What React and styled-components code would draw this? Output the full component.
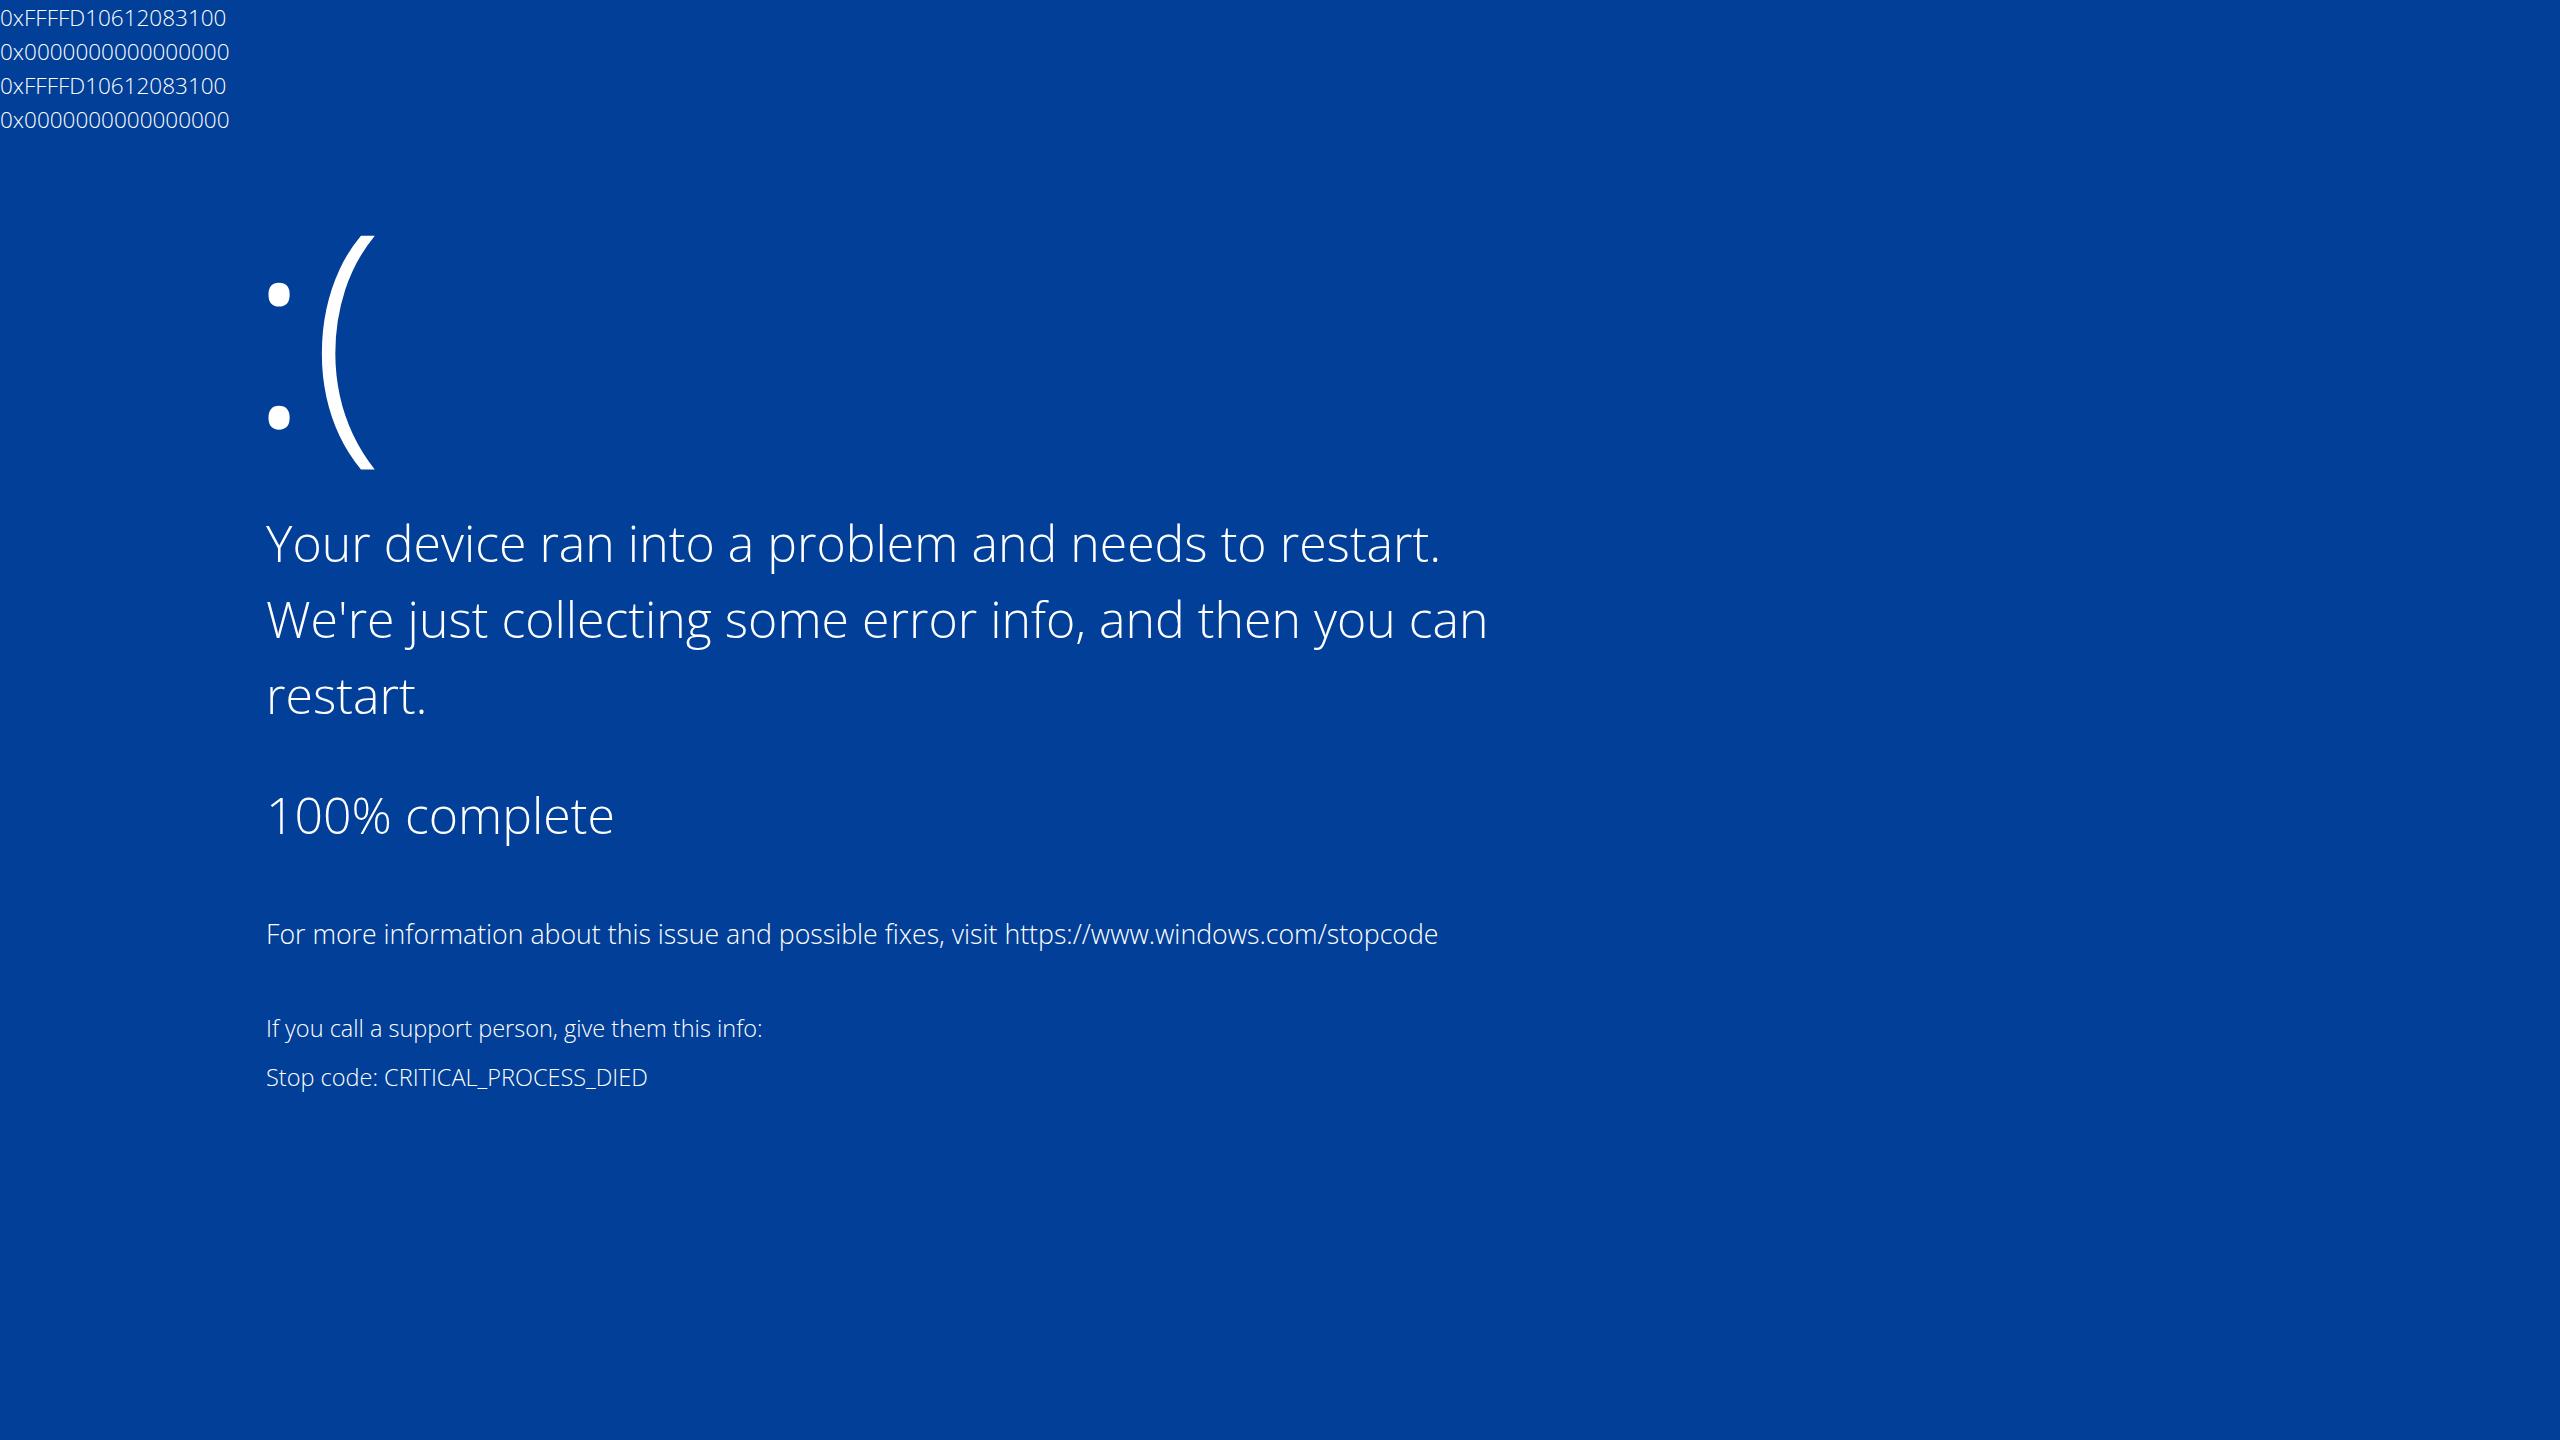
import React from "react"
import styled, { createGlobalStyle } from "styled-components"

const GlobalStyle = createGlobalStyle`
  html, body {
    margin: 0;
    padding: 0;
    background: #013f98;
  }
  body {
    font-family: "Open Sans", "Noto Sans", sans-serif;
    color: #ffffff;
  }
`

const Screen = styled.div`
  width: 2560px;
  height: 1440px;
  background: #013f98;
  overflow: hidden;
`

const HexDump = styled.div`
  font-size: 22.5px;
  font-weight: 300;
  line-height: 34px;
  padding-top: 1px;
`

const Content = styled.main`
  padding-left: 266px;
  padding-top: 53px;
`

const Face = styled.div`
  font-size: 268px;
  font-weight: 300;
  line-height: 1;
  height: 315px;
  margin-left: -19px;
`

const Heading = styled.h1`
  margin: 0;
  max-width: 1300px;
  font-size: 50px;
  font-weight: 300;
  line-height: 76px;
`

const Progress = styled.div`
  margin-top: 44px;
  font-size: 50px;
  font-weight: 300;
  line-height: 76px;
`

const Info = styled.p`
  margin: ${p => p.$top}px 0 0;
  font-size: ${p => p.$size}px;
  font-weight: 300;
  line-height: ${p => p.$lh}px;
`

const hexLines = [
  "0xFFFFD10612083100",
  "0x0000000000000000",
  "0xFFFFD10612083100",
  "0x0000000000000000",
]

const App = () => {
  return (
    <Screen>
      <GlobalStyle />
      <HexDump>
        {hexLines.map((line, i) => (
          <div key={i}>{line}</div>
        ))}
      </HexDump>
      <Content>
        <Face>:(</Face>
        <Heading>
          Your device ran into a problem and needs to restart. We're just collecting some error info, and then you can restart.
        </Heading>
        <Progress>100% complete</Progress>
        <Info $top={61} $size={26.7} $lh={40}>
          For more information about this issue and possible fixes, visit https://www.windows.com/stopcode
        </Info>
        <Info $top={57} $size={23.5} $lh={34}>
          If you call a support person, give them this info:
        </Info>
        <Info $top={15} $size={23.5} $lh={34}>
          Stop code: CRITICAL_PROCESS_DIED
        </Info>
      </Content>
    </Screen>
  )
}

export default App
